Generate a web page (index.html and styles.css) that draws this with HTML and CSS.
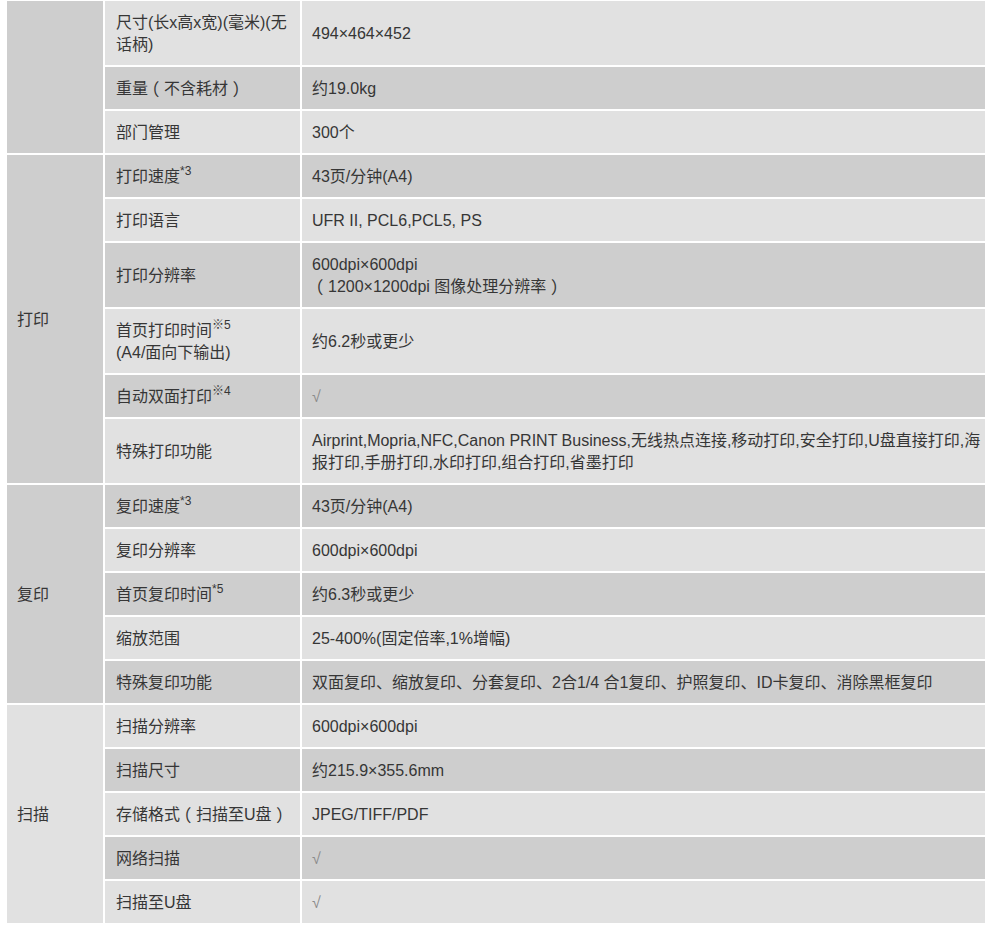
FILE: index.html
```html
<!DOCTYPE html>
<html lang="zh-CN">
<head>
<meta charset="utf-8">
<title>规格参数</title>
<link rel="stylesheet" href="styles.css">
</head>
<body>
<table class="spec">
  <colgroup>
    <col class="c-group">
    <col class="c-name">
    <col class="c-value">
  </colgroup>
  <tbody>
    <tr class="light">
      <td class="group dark" rowspan="3"></td>
      <td class="name">尺寸(长x高x宽)(毫米)(无<br>话柄)</td>
      <td class="value">494×464×452</td>
    </tr>
    <tr class="dark">
      <td class="name">重量<span class="fw">（</span>不含耗材<span class="fw">）</span></td>
      <td class="value">约19.0kg</td>
    </tr>
    <tr class="light">
      <td class="name">部门管理</td>
      <td class="value">300个</td>
    </tr>

    <tr class="dark">
      <td class="group dark" rowspan="6">打印</td>
      <td class="name">打印速度<sup>*3</sup></td>
      <td class="value">43页/分钟(A4)</td>
    </tr>
    <tr class="light">
      <td class="name">打印语言</td>
      <td class="value">UFR II, PCL6,PCL5, PS</td>
    </tr>
    <tr class="dark">
      <td class="name">打印分辨率</td>
      <td class="value">600dpi×600dpi<br><span class="fw">（</span>1200×1200dpi 图像处理分辨率<span class="fw">）</span></td>
    </tr>
    <tr class="light">
      <td class="name">首页打印时间<sup>※5</sup><br>(A4/面向下输出)</td>
      <td class="value">约6.2秒或更少</td>
    </tr>
    <tr class="dark">
      <td class="name">自动双面打印<sup>※4</sup></td>
      <td class="value check">√</td>
    </tr>
    <tr class="light">
      <td class="name">特殊打印功能</td>
      <td class="value nowrap">Airprint,Mopria,NFC,Canon PRINT Business,无线热点连接,移动打印,安全打印,U盘直接打印,海<br>报打印,手册打印,水印打印,组合打印,省墨打印</td>
    </tr>

    <tr class="dark">
      <td class="group dark" rowspan="5">复印</td>
      <td class="name">复印速度<sup>*3</sup></td>
      <td class="value">43页/分钟(A4)</td>
    </tr>
    <tr class="light">
      <td class="name">复印分辨率</td>
      <td class="value">600dpi×600dpi</td>
    </tr>
    <tr class="dark">
      <td class="name">首页复印时间<sup>*5</sup></td>
      <td class="value">约6.3秒或更少</td>
    </tr>
    <tr class="light">
      <td class="name">缩放范围</td>
      <td class="value">25-400%(固定倍率,1%增幅)</td>
    </tr>
    <tr class="dark">
      <td class="name">特殊复印功能</td>
      <td class="value">双面复印、缩放复印、分套复印、2合1/4 合1复印、护照复印、ID卡复印、消除黑框复印</td>
    </tr>

    <tr class="light">
      <td class="group light" rowspan="5">扫描</td>
      <td class="name">扫描分辨率</td>
      <td class="value">600dpi×600dpi</td>
    </tr>
    <tr class="dark">
      <td class="name">扫描尺寸</td>
      <td class="value">约215.9×355.6mm</td>
    </tr>
    <tr class="light">
      <td class="name">存储格式<span class="fw">（</span>扫描至U盘<span class="fw">）</span></td>
      <td class="value">JPEG/TIFF/PDF</td>
    </tr>
    <tr class="dark">
      <td class="name">网络扫描</td>
      <td class="value check">√</td>
    </tr>
    <tr class="light">
      <td class="name">扫描至U盘</td>
      <td class="value check">√</td>
    </tr>
  </tbody>
</table>
</body>
</html>
```

FILE: styles.css
```css
html, body {
  margin: 0;
  padding: 0;
  background: #ffffff;
}

body {
  font-family: "Liberation Sans", Arial, "Noto Sans CJK SC", sans-serif;
  font-size: 16px;
  color: #363636;
}

.spec {
  margin: -1px 0 0 5px;
  width: 982px;
  table-layout: fixed;
  border-collapse: separate;
  border-spacing: 2px;
}

.c-group { width: 96px; }
.c-name { width: 195px; }
.c-value { width: 683px; }

.spec td {
  padding: 11px 6px 9px 10px;
  line-height: 22px;
  vertical-align: middle;
  text-align: left;
}

.spec td.name {
  padding-left: 11px;
}

.spec td.nowrap {
  white-space: nowrap;
  overflow: hidden;
  padding-right: 0;
}

.spec tr.light > td,
.spec td.group.light {
  background: #e1e1e1;
}

.spec tr.dark > td,
.spec td.group.dark {
  background: #cecece;
}

.spec td.group {
  padding-left: 10px;
}

.spec td.check {
  color: #8a8a8a;
}

/* full-width brackets drawn centred in their em box, as in the original */
.spec .fw {
  font-family: "Noto Sans CJK SC", sans-serif;
  font-feature-settings: "hwid" 1;
  line-height: 0;
  padding: 0 4px;
}

.spec sup {
  font-size: 12px;
  line-height: 0;
  vertical-align: 7px;
}
```
